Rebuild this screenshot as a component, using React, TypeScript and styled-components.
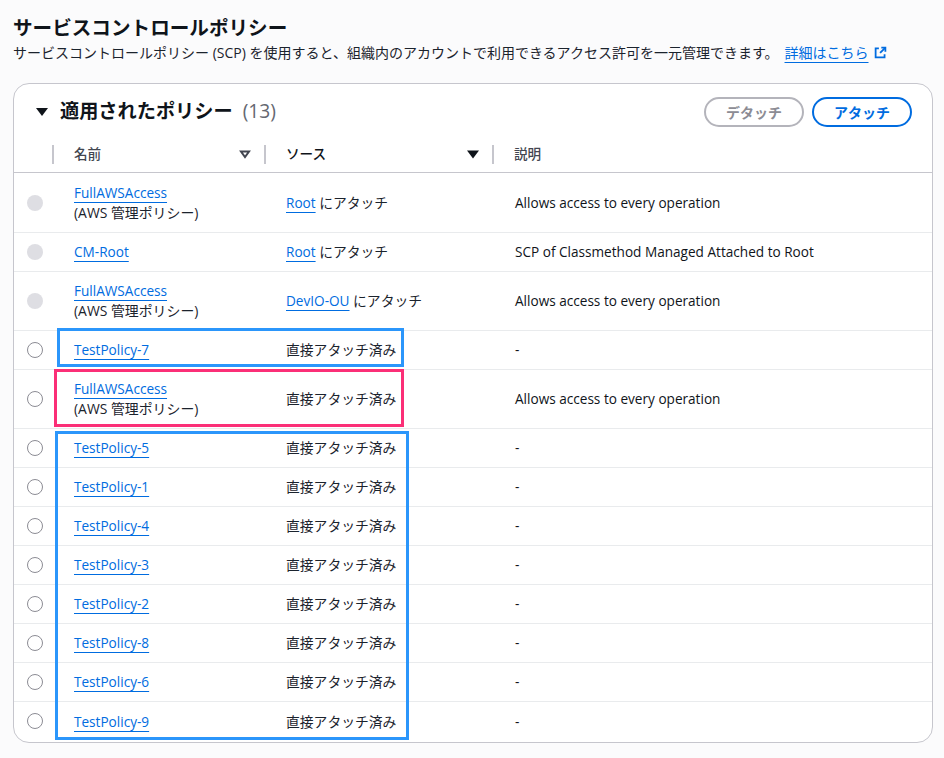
import styled, { createGlobalStyle } from 'styled-components';

type Row = {
  name: string;
  managed?: boolean;
  source?: string;
  locked?: boolean;
  description: string;
};

const rows: Row[] = [
  { name: 'FullAWSAccess', managed: true, source: 'Root', locked: true, description: 'Allows access to every operation' },
  { name: 'CM-Root', source: 'Root', locked: true, description: 'SCP of Classmethod Managed Attached to Root' },
  { name: 'FullAWSAccess', managed: true, source: 'DevIO-OU', locked: true, description: 'Allows access to every operation' },
  { name: 'TestPolicy-7', description: '-' },
  { name: 'FullAWSAccess', managed: true, description: 'Allows access to every operation' },
  { name: 'TestPolicy-5', description: '-' },
  { name: 'TestPolicy-1', description: '-' },
  { name: 'TestPolicy-4', description: '-' },
  { name: 'TestPolicy-3', description: '-' },
  { name: 'TestPolicy-2', description: '-' },
  { name: 'TestPolicy-8', description: '-' },
  { name: 'TestPolicy-6', description: '-' },
  { name: 'TestPolicy-9', description: '-' },
];

const App: React.FC = () => {
  return (
    <>
      <GlobalStyle />
      <Page>
        <PageTitle>サービスコントロールポリシー</PageTitle>
        <PageDescription>
          サービスコントロールポリシー (SCP) を使用すると、組織内のアカウントで利用できるアクセス許可を一元管理できます。
          <InfoLink href="#">詳細はこちら</InfoLink>
          <ExternalIcon viewBox="0 0 16 16">
            <path d="M9 2h5v5" />
            <path d="M14 2 7.5 8.5" />
            <path d="M6 3H2v11h11v-4" />
          </ExternalIcon>
        </PageDescription>

        <Card>
          <CardHeader>
            <HeadingGroup>
              <Caret viewBox="0 0 12 8">
                <path d="M0 0h12L6 8z" />
              </Caret>
              <Heading>
                適用されたポリシー<Count>(13)</Count>
              </Heading>
            </HeadingGroup>
            <Actions>
              <PillButton disabled>デタッチ</PillButton>
              <PillButton>アタッチ</PillButton>
            </Actions>
          </CardHeader>

          <HeaderRow>
            <HeaderCell />
            <HeaderCell $muted $divider>
              <HeaderLabel>名前</HeaderLabel>
              <SortIcon viewBox="0 0 12 9">
                <path d="M2 1.5h8L6 7z" fill="none" stroke="#424650" strokeWidth="2" />
              </SortIcon>
            </HeaderCell>
            <HeaderCell $divider>
              <HeaderLabel>ソース</HeaderLabel>
              <SortIcon viewBox="0 0 12 8">
                <path d="M0 0h12L6 8z" fill="#0f141a" />
              </SortIcon>
            </HeaderCell>
            <HeaderCell $muted $divider>
              <HeaderLabel>説明</HeaderLabel>
            </HeaderCell>
          </HeaderRow>

          <TableBody>
            {rows.map((row, i) => (
              <TableRow key={i}>
                <RadioCell>
                  <Radio $locked={row.locked} />
                </RadioCell>
                <NameCell>
                  <PolicyLink href="#">{row.name}</PolicyLink>
                  {row.managed && <ManagedLabel>(AWS 管理ポリシー)</ManagedLabel>}
                </NameCell>
                <Cell>
                  {row.source ? (
                    <>
                      <PolicyLink href="#">{row.source}</PolicyLink> <JpText>にアタッチ</JpText>
                    </>
                  ) : (
                    <JpText>直接アタッチ済み</JpText>
                  )}
                </Cell>
                <DescriptionCell>{row.description}</DescriptionCell>
              </TableRow>
            ))}
          </TableBody>

          <Highlight $color="#2b96fb" $left={43} $top={244} $width={347} $height={39} />
          <Highlight $color="#fb2f77" $left={40} $top={285} $width={350} $height={58} />
          <Highlight $color="#2b96fb" $left={41} $top={347} $width={354} $height={309} />
        </Card>
      </Page>
    </>
  );
};

const GlobalStyle = createGlobalStyle`
  html, body {
    margin: 0;
    background: #fbfbfc;
  }
  * {
    box-sizing: border-box;
  }
`;

const Page = styled.div`
  width: 944px;
  height: 758px;
  padding: 14px 11px 0 13px;
  overflow: hidden;
  color: #0f141a;
  font-family: 'Open Sans', 'Noto Sans CJK JP', sans-serif;
`;

const PageTitle = styled.h1`
  margin: 0;
  font-size: 19.6px;
  line-height: 26px;
  font-weight: 700;
  font-family: 'Noto Sans CJK JP', sans-serif;
`;

const PageDescription = styled.p`
  margin: 2px 0 0;
  font-size: 14px;
  line-height: 22px;
  color: #1b232d;
  white-space: nowrap;
`;

const InfoLink = styled.a`
  margin-left: 6px;
  color: #006ce0;
  text-decoration: underline;
  text-underline-offset: 4px;
  text-decoration-thickness: 1px;
`;

const ExternalIcon = styled.svg`
  width: 13px;
  height: 13px;
  margin-left: 5px;
  vertical-align: -1px;
  fill: none;
  stroke: #006ce0;
  stroke-width: 2.2;
`;

const Card = styled.section`
  position: relative;
  margin-top: 19px;
  height: 660px;
  background: #ffffff;
  border: 1px solid #c6c6cd;
  border-radius: 16px;
  overflow: hidden;
`;

const CardHeader = styled.div`
  display: flex;
  align-items: center;
  justify-content: space-between;
  height: 60px;
  padding: 0 20px 3px 22px;
`;

const HeadingGroup = styled.div`
  display: flex;
  align-items: center;
  gap: 12px;
`;

const Caret = styled.svg`
  width: 12px;
  height: 8px;
  margin-top: -1px;
  fill: #0f141a;
`;

const Heading = styled.h2`
  margin: 0 0 4px;
  font-size: 19.2px;
  line-height: 24px;
  font-weight: 700;
  font-family: 'Noto Sans CJK JP', sans-serif;
`;

const Count = styled.span`
  margin-left: 10px;
  font-family: 'Open Sans', sans-serif;
  font-weight: 500;
  color: #656871;
`;

const Actions = styled.div`
  display: flex;
  gap: 8px;
  margin-bottom: 2px;
`;

const PillButton = styled.button`
  width: 100px;
  height: 30px;
  padding: 0;
  background: #ffffff;
  border: 2px solid ${(p) => (p.disabled ? '#b4b4bb' : '#006ce0')};
  border-radius: 16px;
  color: ${(p) => (p.disabled ? '#8c8c94' : '#006ce0')};
  font-family: 'Noto Sans CJK JP', sans-serif;
  font-size: 14px;
  font-weight: 700;
`;

const gridColumns = '39px 212px 228px 1fr';

const HeaderRow = styled.div`
  display: grid;
  grid-template-columns: ${gridColumns};
  align-items: start;
  height: 29px;
  padding-top: 1px;
  border-bottom: 1px solid #c6c6cd;
`;

const HeaderCell = styled.div<{ $muted?: boolean; $divider?: boolean }>`
  display: flex;
  align-items: center;
  justify-content: space-between;
  height: 19px;
  padding: 0 14px 0 20px;
  font-size: 13.6px;
  font-weight: 500;
  font-family: 'Noto Sans CJK JP', sans-serif;
  color: ${(p) => (p.$muted ? '#424650' : '#0f141a')};
  border-left: ${(p) => (p.$divider ? '2px solid #c6c6cd' : 'none')};
  margin-left: ${(p) => (p.$divider ? '-1px' : '0')};
`;

const HeaderLabel = styled.span`
  margin-bottom: 4px;
`;

const SortIcon = styled.svg`
  width: 12px;
  height: 9px;
`;

const TableBody = styled.div`
  display: flex;
  flex-direction: column;
`;

const TableRow = styled.div`
  display: grid;
  grid-template-columns: ${gridColumns};
  align-items: center;
  min-height: 39px;
  border-bottom: 1px solid #e9ebed;

  &:first-child {
    padding-top: 1px;
  }

  &:last-child {
    border-bottom: none;
  }
`;

const RadioCell = styled.div`
  display: flex;
  justify-content: flex-end;
  padding-right: 10px;
  margin-top: -1px;
`;

const Radio = styled.span<{ $locked?: boolean }>`
  width: 16px;
  height: 16px;
  border-radius: 50%;
  background: ${(p) => (p.$locked ? '#dedee3' : '#ffffff')};
  border: ${(p) => (p.$locked ? 'none' : '1px solid #8c8c94')};
`;

const Cell = styled.div`
  padding-left: 21px;
  font-size: 13.6px;
  line-height: 20px;
  color: #0f141a;
  white-space: nowrap;
`;

const NameCell = styled(Cell)`
  display: flex;
  flex-direction: column;
  align-items: flex-start;
  padding-top: 9px;
  padding-bottom: 9px;
`;

const DescriptionCell = styled(Cell)`
  padding-left: 22px;
`;

const JpText = styled.span`
  font-size: 13.8px;
  color: #1b232d;
`;

const PolicyLink = styled.a`
  color: #006ce0;
  font-weight: 500;
  text-decoration: underline;
  text-underline-offset: 4px;
  text-decoration-thickness: 1px;
`;

const ManagedLabel = styled.span`
  font-size: 13.9px;
  color: #1b232d;
`;

// 注釈の枠: スクリーンショットに上書きされたもの
const Highlight = styled.div<{
  $color: string;
  $left: number;
  $top: number;
  $width: number;
  $height: number;
}>`
  position: absolute;
  left: ${(p) => p.$left}px;
  top: ${(p) => p.$top}px;
  width: ${(p) => p.$width}px;
  height: ${(p) => p.$height}px;
  border: 3px solid ${(p) => p.$color};
  pointer-events: none;
`;

export default App;
